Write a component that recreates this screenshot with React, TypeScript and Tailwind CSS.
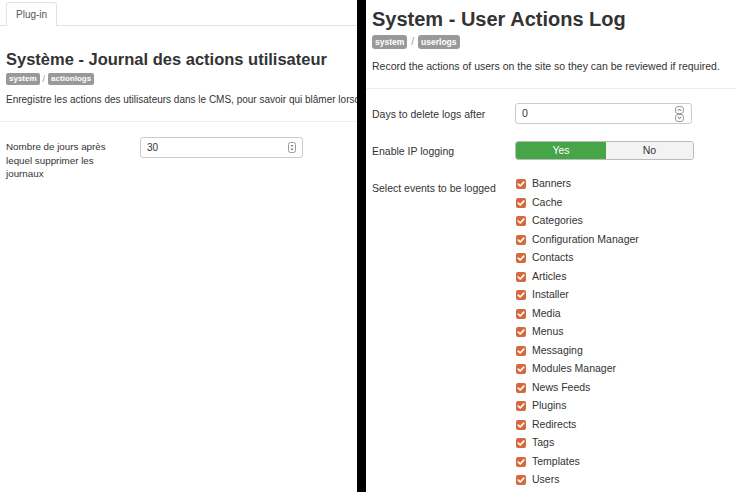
import React from "react";

const events = [
  "Banners",
  "Cache",
  "Categories",
  "Configuration Manager",
  "Contacts",
  "Articles",
  "Installer",
  "Media",
  "Menus",
  "Messaging",
  "Modules Manager",
  "News Feeds",
  "Plugins",
  "Redirects",
  "Tags",
  "Templates",
  "Users",
];

function Badge({ children, small }: { children: React.ReactNode; small?: boolean }) {
  return (
    <span
      className={
        small
          ? "inline-block rounded-[2px] bg-[#999] px-[3px] text-[8px] font-bold leading-[12px] text-white"
          : "inline-block rounded-[3px] bg-[#999] px-[3px] text-[8.5px] font-bold leading-[14px] text-white"
      }
    >
      {children}
    </span>
  );
}

function SpinSmall() {
  return (
    <svg width="8" height="11" viewBox="0 0 8 11" className="block">
      <rect x="0.5" y="0.5" width="7" height="10" rx="2" fill="#fff" stroke="#9a9a9a" />
      <path d="M2.5 4.2 L4 2.7 L5.5 4.2 Z" fill="#555" />
      <path d="M2.5 6.8 L4 8.3 L5.5 6.8 Z" fill="#555" />
    </svg>
  );
}

function SpinDouble() {
  return (
    <svg width="9" height="16" viewBox="0 0 9 16" className="block">
      <rect x="0.5" y="0.5" width="8" height="7" rx="2.5" fill="#fff" stroke="#9a9a9a" />
      <rect x="0.5" y="8.5" width="8" height="7" rx="2.5" fill="#fff" stroke="#9a9a9a" />
      <path d="M2.8 4.8 L4.5 3.1 L6.2 4.8" fill="none" stroke="#555" strokeWidth="1" />
      <path d="M2.8 11 L4.5 12.7 L6.2 11" fill="none" stroke="#555" strokeWidth="1" />
    </svg>
  );
}

function CheckBox() {
  return (
    <svg width="10" height="10" viewBox="0 0 10 10" className="block shrink-0 translate-y-[1px]">
      <rect x="0" y="0" width="10" height="10" rx="2" fill="#d6693c" />
      <path d="M2.3 5.1 L4.2 7 L7.8 3.2" fill="none" stroke="#fff" strokeWidth="1.7" strokeLinecap="round" strokeLinejoin="round" />
    </svg>
  );
}

export default function App() {
  return (
    <div
      className="flex h-[492px] w-[736px] overflow-hidden bg-white text-[#333]"
      style={{ fontFamily: '"Liberation Sans", Arial, sans-serif' }}
    >
      {/* Left panel (French) */}
      <div className="w-[357px] shrink-0 overflow-hidden">
        <div className="flex h-[26px] items-end border-b border-[#e3e3e3]">
          <div className="relative -mb-px ml-[6px] h-[24px] rounded-t-[3px] border border-b-0 border-[#e3e3e3] bg-white px-[9px] text-[10px] leading-[23px] text-[#555]">
            Plug-in
          </div>
        </div>
        <div className="pl-[6px]">
          <h1 className="mt-[23px] whitespace-nowrap text-[16.5px] font-bold leading-[20px]">
            Système - Journal des actions utilisateur
          </h1>
          <div className="mt-[4px] flex items-center gap-[3px] text-[9px] leading-[12px]">
            <Badge small>system</Badge>
            <span className="text-[#999]">/</span>
            <Badge small>actionlogs</Badge>
          </div>
          <p className="mt-[8px] whitespace-nowrap text-[10px] leading-[14px]">
            Enregistre les actions des utilisateurs dans le CMS, pour savoir qui blâmer lorsque quelque chose se passe mal.
          </p>
        </div>
        <div className="mt-[14px] border-t border-[#eee]" />
        <div className="mt-[15px] flex pl-[6px]">
          <div className="w-[118px] pt-[3px] text-[9.8px] leading-[13.5px]">
            Nombre de jours après lequel supprimer les journaux
          </div>
          <div className="ml-[16px] flex h-[21px] w-[163px] items-center justify-between rounded-[3px] border border-[#ccc] pl-[6px] pr-[6px] text-[10px]">
            <span>30</span>
            <SpinSmall />
          </div>
        </div>
      </div>

      {/* Divider */}
      <div className="w-[9px] shrink-0 bg-black" />

      {/* Right panel (English) */}
      <div className="flex-1 overflow-hidden">
        <div className="pl-[6px]">
          <h1 className="mt-[8px] whitespace-nowrap text-[20px] font-bold leading-[22px]">
            System - User Actions Log
          </h1>
          <div className="mt-[5px] flex items-center gap-[4px] text-[10px] leading-[14px]">
            <Badge>system</Badge>
            <span className="text-[#999]">/</span>
            <Badge>userlogs</Badge>
          </div>
          <p className="mt-[9px] whitespace-nowrap text-[10.5px] leading-[16px]">
            Record the actions of users on the site so they can be reviewed if required.
          </p>
        </div>
        <div className="mt-[14px] border-t border-[#eee]" />
        <div className="pl-[6px] text-[10.5px]">
          <div className="mt-[14px] flex items-center">
            <div className="w-[143px] leading-[16px]">Days to delete logs after</div>
            <div className="flex h-[21px] w-[177px] items-center justify-between rounded-[3px] border border-[#ccc] pl-[6px] pr-[7px]">
              <span>0</span>
              <SpinDouble />
            </div>
          </div>
          <div className="mt-[17px] flex items-center">
            <div className="w-[143px] leading-[16px]">Enable IP logging</div>
            <div className="flex h-[19px] w-[179px] overflow-hidden rounded-[3px] border border-[#bbb]">
              <div className="flex w-[90px] items-center justify-center bg-[#46a546] text-white">Yes</div>
              <div className="flex flex-1 items-center justify-center bg-[#f3f3f3] text-[#333]">No</div>
            </div>
          </div>
          <div className="mt-[14px] flex">
            <div className="w-[143px] pt-[5px] leading-[18.5px]">Select events to be logged</div>
            <div className="flex flex-col pl-[1px]">
              {events.map((e) => (
                <div key={e} className="flex h-[18.5px] items-center gap-[6px] whitespace-nowrap">
                  <CheckBox />
                  <span className="leading-[18.5px]">{e}</span>
                </div>
              ))}
            </div>
          </div>
        </div>
      </div>
    </div>
  );
}
